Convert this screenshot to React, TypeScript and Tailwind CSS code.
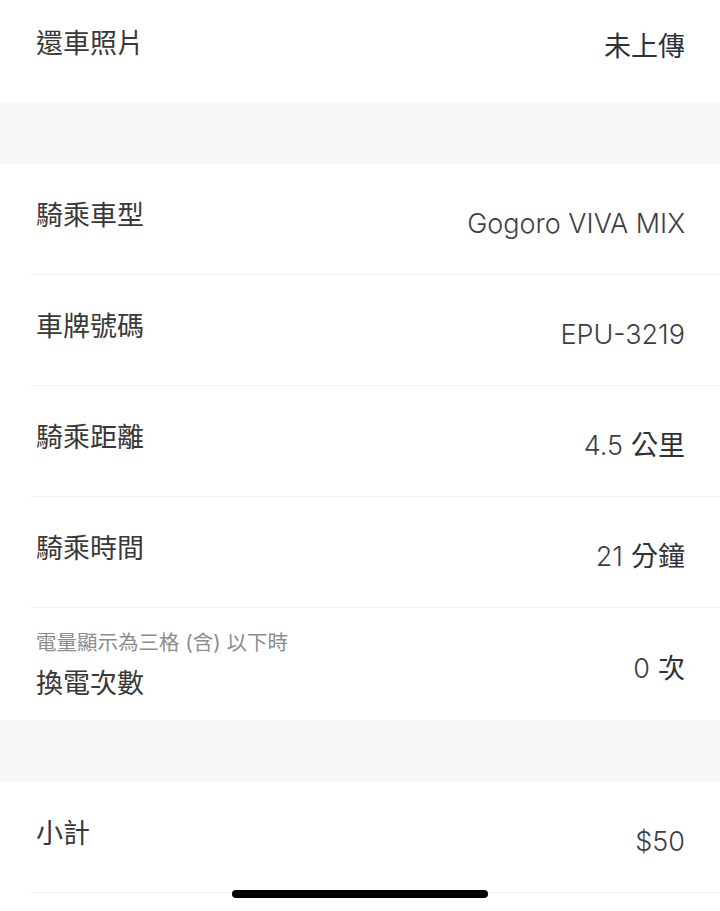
import * as React from "react";

type Row = {
  label: string;
  value: string;
  unit?: string;
  hint?: string;
};

const RIDE_ROWS: Row[] = [
  { label: "騎乘車型", value: "Gogoro VIVA MIX" },
  { label: "車牌號碼", value: "EPU-3219" },
  { label: "騎乘距離", value: "4.5", unit: "公里" },
  { label: "騎乘時間", value: "21", unit: "分鐘" },
  { label: "換電次數", value: "0", unit: "次", hint: "電量顯示為三格 (含) 以下時" },
];

function Value({ value, unit }: { value: string; unit?: string }): React.JSX.Element {
  return (
    <span className="pt-[8px] text-[27px] leading-none font-light text-[#3b3e45]">
      {value}
      {unit && <span className="ml-[8px] font-normal text-[#2e3138]">{unit}</span>}
    </span>
  );
}

function DetailRow({ row, last }: { row: Row; last?: boolean }): React.JSX.Element {
  return (
    <div
      className={
        last
          ? "ml-[30px] flex h-[112px] items-center justify-between pr-[35px] pl-[6px]"
          : "ml-[30px] flex h-[111px] items-center justify-between border-b border-[#f3f3f3] pr-[35px] pl-[6px]"
      }
    >
      {row.hint ? (
        <div className="flex flex-col pt-[2px]">
          <span className="text-[20.5px] leading-none text-[#8c8c8c]">{row.hint}</span>
          <span className="mt-[16px] text-[27px] leading-none text-[#383838]">{row.label}</span>
        </div>
      ) : (
        <span className="pb-[8px] text-[27px] leading-none text-[#383838]">{row.label}</span>
      )}
      <Value value={row.value} unit={row.unit} />
    </div>
  );
}

export default function App(): React.JSX.Element {
  return (
    <main className="relative h-[911px] w-[720px] overflow-hidden bg-white font-['Inter','Noto_Sans_CJK_TC',sans-serif]">
      <section className="flex h-[102px] items-center justify-between pr-[35px] pb-[10px] pl-[36px]">
        <span className="pb-[6px] text-[27px] leading-none text-[#383838]">還車照片</span>
        <span className="text-[27px] leading-none text-[#2e3138]">未上傳</span>
      </section>

      <div className="h-[62px] bg-[#f8f8f8]" />

      <section>
        {RIDE_ROWS.map((row, i) => (
          <DetailRow key={row.label} row={row} last={i === RIDE_ROWS.length - 1} />
        ))}
      </section>

      <div className="h-[62px] bg-[#f8f8f8]" />

      <section>
        <DetailRow row={{ label: "小計", value: "$50" }} />
      </section>

      <div
        aria-hidden="true"
        className="absolute bottom-[13px] left-[232px] h-[8px] w-[256px] rounded-full bg-black"
      />
    </main>
  );
}
